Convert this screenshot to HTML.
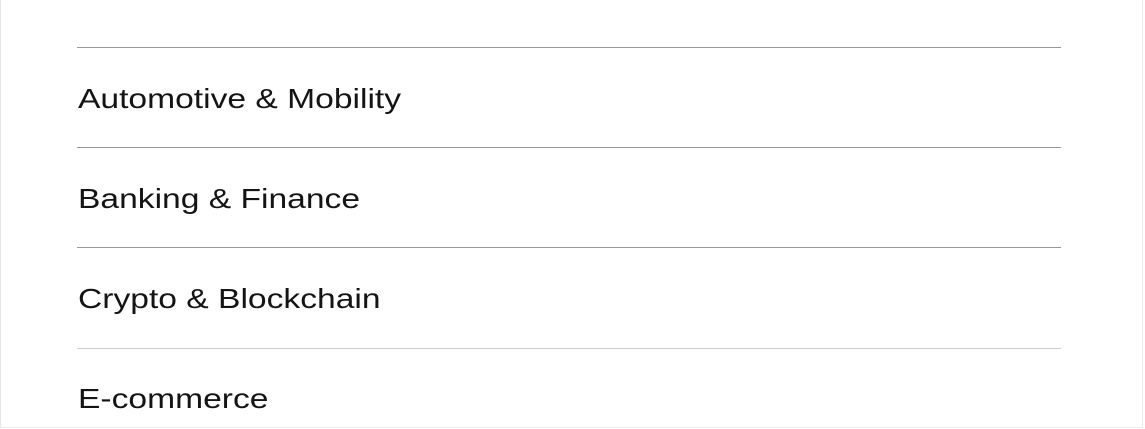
<!DOCTYPE html>
<html><head><style>
html,body{margin:0;padding:0;width:1145px;height:429px;overflow:hidden;background:#fff}
.frame{position:absolute;left:0;top:0;width:1143px;height:428px;border-left:1px solid #e6e6e6;border-right:1px solid #ececec;border-bottom:1px solid #ececec;box-sizing:border-box}
.line{position:absolute;left:77px;width:984px;height:1px;background:#999}
.t{position:absolute;left:78px;font-family:"Liberation Sans",sans-serif;font-size:28px;color:#141414;line-height:30px;transform:scaleX(1.2);transform-origin:0 0;white-space:nowrap}
</style></head><body>
<div class="frame"></div>
<div class="line" style="top:47px"></div>
<div class="t" style="top:84px">Automotive &amp; Mobility</div>
<div class="line" style="top:147px"></div>
<div class="t" style="top:184px">Banking &amp; Finance</div>
<div class="line" style="top:247px"></div>
<div class="t" style="top:284px">Crypto &amp; Blockchain</div>
<div class="line" style="top:348px;background:#ccc"></div>
<div class="t" style="top:384px">E-commerce</div>
</body></html>
